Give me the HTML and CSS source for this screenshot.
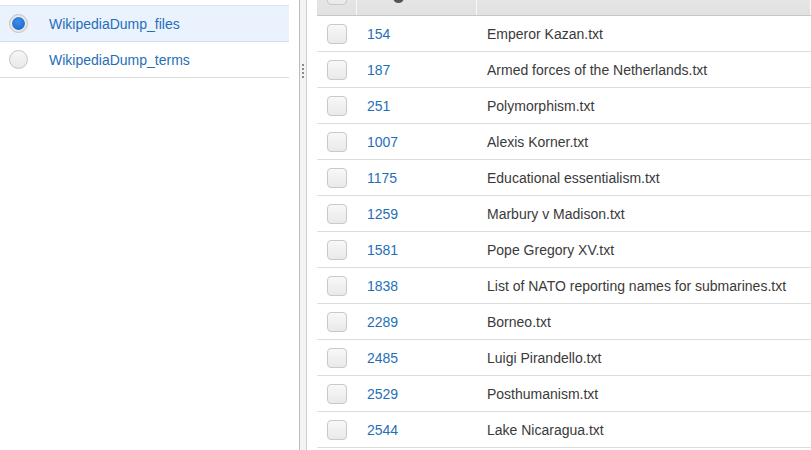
FILE: index.html
```html
<!DOCTYPE html>
<html>
<head>
<meta charset="utf-8">
<link rel="stylesheet" href="styles.css">
</head>
<body>
<div class="app">
  <div class="left">
    <ul class="tables">
      <li class="trow selected"><span class="radio on"></span><a class="tname">WikipediaDump_files</a></li>
      <li class="trow"><span class="radio"></span><a class="tname">WikipediaDump_terms</a></li>
    </ul>
  </div>
  <div class="splitter"><span class="grip"><i></i><i></i><i></i><i></i></span></div>
  <div class="right">
    <div class="grid">
      <div class="ghead">
        <div class="hc c-check"><span class="cb"></span></div>
        <div class="hc c-id"><span class="sorticon"></span></div>
        <div class="hc c-name"></div>
      </div>
      <div class="grow"><div class="c-check"><span class="cb"></span></div><div class="c-id">154</div><div class="c-name">Emperor Kazan.txt</div></div>
      <div class="grow"><div class="c-check"><span class="cb"></span></div><div class="c-id">187</div><div class="c-name">Armed forces of the Netherlands.txt</div></div>
      <div class="grow"><div class="c-check"><span class="cb"></span></div><div class="c-id">251</div><div class="c-name">Polymorphism.txt</div></div>
      <div class="grow"><div class="c-check"><span class="cb"></span></div><div class="c-id">1007</div><div class="c-name">Alexis Korner.txt</div></div>
      <div class="grow"><div class="c-check"><span class="cb"></span></div><div class="c-id">1175</div><div class="c-name">Educational essentialism.txt</div></div>
      <div class="grow"><div class="c-check"><span class="cb"></span></div><div class="c-id">1259</div><div class="c-name">Marbury v Madison.txt</div></div>
      <div class="grow"><div class="c-check"><span class="cb"></span></div><div class="c-id">1581</div><div class="c-name">Pope Gregory XV.txt</div></div>
      <div class="grow"><div class="c-check"><span class="cb"></span></div><div class="c-id">1838</div><div class="c-name">List of NATO reporting names for submarines.txt</div></div>
      <div class="grow"><div class="c-check"><span class="cb"></span></div><div class="c-id">2289</div><div class="c-name">Borneo.txt</div></div>
      <div class="grow"><div class="c-check"><span class="cb"></span></div><div class="c-id">2485</div><div class="c-name">Luigi Pirandello.txt</div></div>
      <div class="grow"><div class="c-check"><span class="cb"></span></div><div class="c-id">2529</div><div class="c-name">Posthumanism.txt</div></div>
      <div class="grow"><div class="c-check"><span class="cb"></span></div><div class="c-id">2544</div><div class="c-name">Lake Nicaragua.txt</div></div>
    </div>
  </div>
</div>
</body>
</html>
```
FILE: styles.css
```css
html, body {
  margin: 0;
  padding: 0;
  background: #fff;
  overflow: hidden;
}
body {
  font-family: "Liberation Sans", Arial, sans-serif;
  font-size: 14px;
  color: #333;
}
.app {
  display: flex;
  height: 450px;
  width: 811px;
}
.left {
  width: 289px;
  padding-right: 10px;
  padding-top: 5px;
  flex: none;
}
.tables {
  list-style: none;
  margin: 0;
  padding: 0;
  border-top: 1px solid #dfe4ea;
}
.trow {
  display: flex;
  align-items: center;
  height: 35px;
  border-bottom: 1px solid #dcdcdc;
}
.trow.selected {
  background: #eaf2fd;
  border-bottom-color: #d6dde6;
}
.radio {
  width: 17px;
  height: 17px;
  border-radius: 50%;
  margin-left: 9px;
  border: 1px solid #c4c4c4;
  background: linear-gradient(#f6f6f6, #e8e8e8);
  box-sizing: content-box;
  flex: none;
  position: relative;
}
.radio.on {
  background: #f2f2f2;
  box-shadow: inset 0 0 0 1px #e0e0e0;
}
.radio.on::after {
  content: "";
  position: absolute;
  left: 2px;
  top: 2px;
  width: 13px;
  height: 13px;
  border-radius: 50%;
  background: radial-gradient(circle at 45% 35%, #3d8ee6, #1462c8);
}
.tname {
  margin-left: 21px;
  color: #1f6fb8;
  font-size: 14px;
}
.splitter {
  width: 6px;
  flex: none;
  background: #f3f3f3;
  border-left: 1px solid #bdbdbd;
  border-right: 1px solid #cfcfcf;
  display: flex;
  flex-direction: column;
  align-items: center;
  padding-top: 64px;
  box-sizing: content-box;
}
.grip {
  display: flex;
  flex-direction: column;
  gap: 2px;
}
.grip i {
  display: block;
  width: 2px;
  height: 2px;
  background: #8a8a8a;
}
.right {
  flex: 1;
  padding-left: 10px;
  overflow: hidden;
}
.grid {
  margin-top: -15px;
}
.ghead {
  display: flex;
  height: 30px;
  background: linear-gradient(#e9e9e9, #e1e1e1);
  border-bottom: 1px solid #c8c8c8;
}
.hc {
  border-right: 1px solid #f8f8f8;
  box-sizing: border-box;
}
.ghead .c-check {
  align-items: flex-start;
}
.ghead .c-check .cb {
  margin-top: 0;
}
.sorticon {
  display: block;
  width: 11px;
  height: 11px;
  border-radius: 50%;
  background: #555;
  margin-left: 26px;
  margin-top: 7px;
}
.grow {
  display: flex;
  align-items: center;
  height: 35px;
  border-bottom: 1px solid #dcdcdc;
}
.c-check {
  width: 40px;
  flex: none;
  display: flex;
  align-items: center;
  padding-left: 10px;
  box-sizing: border-box;
}
.c-id {
  width: 120px;
  flex: none;
  padding-left: 10px;
  box-sizing: border-box;
  color: #1f6fb8;
}
.c-name {
  flex: 1;
  padding-left: 10px;
  white-space: nowrap;
  color: #3a3a3a;
}
.cb {
  display: block;
  width: 18px;
  height: 18px;
  border: 1px solid #c9c9c9;
  border-radius: 4px;
  background: linear-gradient(#f8f8f8, #e9e9e9);
  margin-top: 1px;
}
```
